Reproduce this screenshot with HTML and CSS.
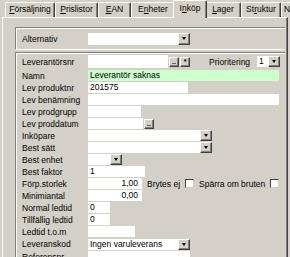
FILE: index.html
```html
<!DOCTYPE html>
<html lang="sv">
<head>
    <meta charset="UTF-8">
    <title>Artikel - Inköp</title>
    <link rel="stylesheet" href="styles.css">
</head>
<body>

    <!-- Tab strip -->
    <div class="tabs">
        <div class="tab t-fors"><u>F</u>örsäljning</div>
        <div class="tab t-pris"><u>P</u>rislistor</div>
        <div class="tab t-ean"><u>E</u>AN</div>
        <div class="tab t-enh">E<u>n</u>heter</div>
        <div class="tab t-ink active">I<u>n</u>köp</div>
        <div class="tab t-lag"><u>L</u>ager</div>
        <div class="tab t-str">St<u>r</u>uktur</div>
        <div class="tab t-n">N</div>
    </div>

    <!-- Tab page -->
    <div class="panel">

        <div class="box alt-box">
            <div class="row">
                <span class="lbl">Alternativ</span>
                <span class="fld w90"></span><span class="arr"></span>
            </div>
        </div>

        <div class="box main-box">
            <div class="row tall">
                <span class="lbl">Leverantörsnr</span>
                <span class="fld w80 h13"></span>
                <span class="btn">..</span>
                <span class="btn">*</span>
                <span class="prio-lbl">Prioritering</span>
                <span class="fld w11">1</span><span class="arr"></span>
            </div>
            <div class="row">
                <span class="lbl">Namn</span>
                <span class="fld w191 green">Leverantör saknas</span>
            </div>
            <div class="row">
                <span class="lbl">Lev produktnr</span>
                <span class="fld w100">201575</span>
            </div>
            <div class="row">
                <span class="lbl">Lev benämning</span>
                <span class="fld w191"></span>
            </div>
            <div class="row">
                <span class="lbl">Lev prodgrupp</span>
                <span class="fld w53"></span>
            </div>
            <div class="row">
                <span class="lbl">Lev proddatum</span>
                <span class="fld w55"></span><span class="btn">..</span>
            </div>
            <div class="row">
                <span class="lbl">Inköpare</span>
                <span class="fld w112"></span><span class="arr"></span>
            </div>
            <div class="row">
                <span class="lbl">Best sätt</span>
                <span class="fld w112"></span><span class="arr"></span>
            </div>
            <div class="row">
                <span class="lbl">Best enhet</span>
                <span class="fld w22"></span><span class="arr"></span>
            </div>
            <div class="row">
                <span class="lbl">Best faktor</span>
                <span class="fld w56">1</span>
            </div>
            <div class="row">
                <span class="lbl">Förp.storlek</span>
                <span class="fld w54 num">1,00</span>
                <span class="chk-lbl">Brytes ej</span><span class="chk"></span>
                <span class="chk-lbl">Spärra om bruten</span><span class="chk"></span>
            </div>
            <div class="row">
                <span class="lbl">Minimiantal</span>
                <span class="fld w54 num">0,00</span>
            </div>
            <div class="row">
                <span class="lbl">Normal ledtid</span>
                <span class="fld w22">0</span>
            </div>
            <div class="row">
                <span class="lbl">Tillfällig ledtid</span>
                <span class="fld w22">0</span>
            </div>
            <div class="row">
                <span class="lbl">Ledtid t.o.m</span>
                <span class="fld w47"></span>
            </div>
            <div class="row combo">
                <span class="lbl">Leveranskod</span>
                <span class="fld w90">Ingen varuleverans</span><span class="arr"></span>
            </div>
            <div class="row">
                <span class="lbl">Referensnr</span>
                <span class="fld w102"></span>
            </div>
        </div>

    </div>

</body>
</html>
```
FILE: styles.css
```css
/* General */
body {
    margin: 0;
    width: 290px;
    height: 257px;
    overflow: hidden;
    background: #d4d0c8;
    font-family: "Liberation Sans", Arial, sans-serif;
    font-size: 8.5px;
    color: #000;
}

/* Tabs */
.tabs {
    display: flex;
    align-items: flex-end;
    height: 17px;
    padding-left: 5px;
    position: relative;
    z-index: 2;
}

.tab {
    box-sizing: border-box;
    height: 15px;
    line-height: 13px;
    text-align: center;
    border-top: 1px solid #fff;
    border-left: 1px solid #fff;
    border-right: 1px solid #404040;
    border-radius: 2px 2px 0 0;
    box-shadow: inset -1px 0 #808080;
    white-space: nowrap;
    flex: none;
}

.tab.active {
    height: 18px;
    line-height: 14px;
    margin: 0 -2px -1px;
    background: #d4d0c8;
    position: relative;
}

.t-fors { width: 50px; }
.t-pris { width: 43px; }
.t-ean  { width: 33px; }
.t-enh  { width: 44px; }
.t-ink  { width: 34px; }
.t-lag  { width: 36px; }
.t-str  { width: 40px; }
.t-n    { width: 20px; text-align: left; padding-left: 2px; }

/* Tab page */
.panel {
    box-sizing: border-box;
    width: 286px;
    height: 240px;
    margin-left: 2px;
    padding: 9px 0 0 12px;
    border-top: 1px solid #fff;
    border-left: 1px solid #fff;
    border-right: 1px solid #404040;
    box-shadow: inset -1px 0 #808080;
    overflow: hidden;
}

/* Group boxes */
.box {
    box-sizing: border-box;
    width: 270px;
    border-top: 1px solid #808080;
    border-left: 1px solid #808080;
    box-shadow: inset 1px 1px #fff;
}

.alt-box {
    height: 23px;
    padding-top: 5px;
    border-bottom: 1px solid #fff;
}

.alt-box .row {
    height: 12px;
}

.alt-box .fld {
    height: 12px;
}

.main-box {
    margin-top: 2px;
    padding-top: 2px;
    height: 205px;
    overflow: hidden;
}

/* Rows */
.row {
    display: flex;
    align-items: center;
    height: 11px;
    margin-bottom: 1px;
}

.row.tall {
    height: 13px;
    margin-bottom: 2px;
}

.row.combo {
    height: 12px;
    margin-top: 1px;
}

.lbl {
    flex: none;
    box-sizing: border-box;
    width: 72px;
    padding-left: 6px;
    white-space: nowrap;
}

/* Fields */
.fld {
    flex: none;
    box-sizing: border-box;
    height: 11px;
    line-height: 11px;
    padding-left: 2px;
    background: #fff;
    white-space: nowrap;
    overflow: hidden;
}

.fld.h13 { height: 13px; }
.fld.green { background: #ccffcc; }
.fld.num { text-align: right; padding-right: 4px; }

.w11  { width: 11px; }
.w22  { width: 22px; }
.w47  { width: 47px; }
.w53  { width: 53px; }
.w54  { width: 54px; }
.w55  { width: 55px; }
.w56  { width: 57px; }
.w80  { width: 80px; }
.w90  { width: 90px; }
.w100 { width: 100px; }
.w102 { width: 102px; }
.w112 { width: 112px; }
.w191 { width: 191px; }

/* 3D buttons */
.btn,
.arr {
    flex: none;
    box-sizing: border-box;
    background: #d4d0c8;
    border-top: 1px solid #fff;
    border-left: 1px solid #fff;
    border-right: 1px solid #404040;
    border-bottom: 1px solid #404040;
    box-shadow: inset -1px -1px #808080;
}

.btn {
    width: 10px;
    height: 10px;
    margin-left: 1px;
    font-size: 7px;
    line-height: 7px;
    font-weight: bold;
    text-align: center;
}

.arr {
    width: 12px;
    height: 11px;
    position: relative;
}

.arr::after {
    content: "";
    position: absolute;
    left: 3px;
    top: 3px;
    border-left: 2.5px solid transparent;
    border-right: 2.5px solid transparent;
    border-top: 3px solid #000;
}

.alt-box .arr {
    height: 12px;
}

.prio-lbl {
    margin-left: 19px;
    width: 48px;
}

/* Checkboxes */
.chk-lbl {
    margin-left: 5px;
}

.chk {
    flex: none;
    box-sizing: border-box;
    width: 9px;
    height: 9px;
    margin-left: 5px;
    background: #fff;
    border-top: 1px solid #404040;
    border-left: 1px solid #404040;
    border-right: 1px solid #d4d0c8;
    border-bottom: 1px solid #d4d0c8;
}
```
